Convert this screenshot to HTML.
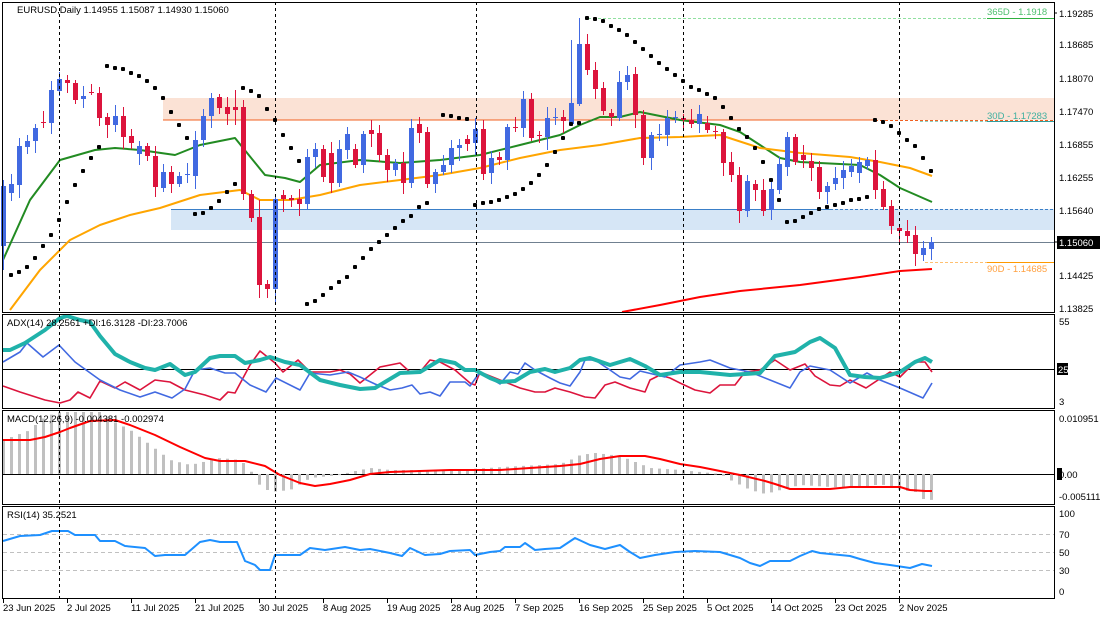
<!DOCTYPE html>
<html><head><meta charset="utf-8"><style>
html,body{margin:0;padding:0;background:#fff;width:1100px;height:619px;overflow:hidden}
svg{display:block;font-family:"Liberation Sans",sans-serif;font-size:9.5px}
</style></head><body>
<svg id="s" width="1100" height="619" xmlns="http://www.w3.org/2000/svg">
<rect width="1100" height="619" fill="#fff"/>
<rect x="163" y="98" width="891" height="22" fill="#fbe2d5"/>
<line x1="163" y1="120" x2="875" y2="120" stroke="#f06020" stroke-width="1"/>
<line x1="875" y1="120.5" x2="1054" y2="120.5" stroke="#f06020" stroke-dasharray="3,2"/>
<line x1="920" y1="121.5" x2="1054" y2="121.5" stroke="#8fd0c0" stroke-dasharray="3,2"/>
<rect x="171" y="209" width="883" height="21" fill="#d6e6f6"/>
<line x1="171" y1="209.5" x2="830" y2="209.5" stroke="#3a7fc8"/>
<line x1="830" y1="209.5" x2="1054" y2="209.5" stroke="#3a7fc8" stroke-dasharray="3,2"/>
<line x1="3" y1="242.5" x2="1054" y2="242.5" stroke="#708090"/>
<line x1="588" y1="18.5" x2="1054" y2="18.5" stroke="#90e0a0" stroke-dasharray="3,2"/>
<line x1="987" y1="18.5" x2="1054" y2="18.5" stroke="#30b040" stroke-width="1"/>
<line x1="925" y1="262.5" x2="1054" y2="262.5" stroke="#ffc070" stroke-dasharray="3,2"/>
<line x1="987" y1="262.5" x2="1054" y2="262.5" stroke="#ff9900"/>
<line x1="987" y1="121.5" x2="1054" y2="121.5" stroke="#30a0a0"/>
<g id="main"></g>
<line x1="3" y1="534.5" x2="1054" y2="534.5" stroke="#c0c0c0" stroke-dasharray="4,3"/>
<line x1="3" y1="552.5" x2="1054" y2="552.5" stroke="#c0c0c0" stroke-dasharray="4,3"/>
<line x1="3" y1="570.5" x2="1054" y2="570.5" stroke="#c0c0c0" stroke-dasharray="4,3"/>
<line x1="3" y1="369.5" x2="1054" y2="369.5" stroke="#000"/>
<line x1="3" y1="474.5" x2="1054" y2="474.5" stroke="#000"/>
<g id="ind"></g>
<g stroke="#000" stroke-dasharray="3,3">
<line x1="59.5" y1="2" x2="59.5" y2="598"/><line x1="275.5" y1="2" x2="275.5" y2="598"/>
<line x1="476.5" y1="2" x2="476.5" y2="598"/><line x1="683.5" y1="2" x2="683.5" y2="598"/>
<line x1="899.5" y1="2" x2="899.5" y2="598"/></g>
<g fill="none" stroke="#000">
<rect x="2.5" y="2.5" width="1052" height="310"/>
<rect x="2.5" y="314.5" width="1052" height="94"/>
<rect x="2.5" y="410.5" width="1052" height="94"/>
<rect x="2.5" y="506.5" width="1052" height="92"/>
</g>
<g fill="#000">
<text x="17" y="13">EURUSD,Daily  1.14955 1.15087 1.14930 1.15060</text>
<text x="7" y="326">ADX(14) 28.2561 +DI:16.3128 -DI:23.7006</text>
<text x="7" y="422">MACD(12,26,9) -0.004381 -0.002974</text>
<text x="7" y="518">RSI(14) 35.2521</text>
</g>
<text x="987" y="15" fill="#50c070">365D - 1.1918</text>
<text x="987" y="119" fill="#40b0a0">30D - 1.17283</text>
<text x="987" y="272" fill="#ffa040">90D - 1.14685</text>
<g fill="#000">
<text x="1059" y="17">1.19285</text><text x="1059" y="48">1.18685</text><text x="1059" y="82">1.18070</text>
<text x="1059" y="115">1.17470</text><text x="1059" y="148">1.16855</text><text x="1059" y="181">1.16255</text>
<text x="1059" y="214">1.15640</text><text x="1059" y="279">1.14425</text><text x="1059" y="312">1.13825</text>
<text x="1059" y="325">55</text><text x="1059" y="405">3</text>
<text x="1059" y="422">0.010951</text><text x="1059" y="500">-0.005111</text>
<text x="1059" y="517">100</text><text x="1059" y="538">70</text><text x="1059" y="556">50</text><text x="1059" y="574">30</text><text x="1059" y="595">0</text>
</g>
<rect x="1057" y="236" width="43" height="13" fill="#000"/><text x="1059" y="246" fill="#fff">1.15060</text>
<rect x="1057" y="363" width="11" height="12" fill="#000"/><text x="1058" y="373" fill="#fff">25</text>
<rect x="1057" y="468" width="5" height="12" fill="#000"/><text x="1059" y="478" fill="#000">0.00</text>
<g stroke="#000"><line x1="1054" y1="13" x2="1057" y2="13"/><line x1="1054" y1="242" x2="1057" y2="242"/></g>
<g id="dates" fill="#000"></g>
</svg>
<script>
var NS="http://www.w3.org/2000/svg";
function el(p,t,a){var e=document.createElementNS(NS,t);for(var k in a)e.setAttribute(k,a[k]);p.appendChild(e);return e;}
function pl(g,pts,c,w){el(g,"polyline",{points:pts.map(function(p){return p[0]+","+p[1]}).join(" "),fill:"none",stroke:c,"stroke-width":w,"stroke-linejoin":"round"});}
function interp(pts,x){for(var i=0;i<pts.length-1;i++){if(x<=pts[i+1][0]){var a=pts[i],b=pts[i+1];return a[1]+(b[1]-a[1])*(x-a[0])/(b[0]-a[0]);}}return pts[pts.length-1][1];}
var M=document.getElementById("main"),I=document.getElementById("ind");
pl(M,[[3,260],[30,200],[60,160],[95,150],[115,148],[140,150],[175,155],[200,145],[235,138],[265,175],[285,178],[300,182],[320,165],[360,160],[400,163],[440,160],[480,155],[520,145],[560,135],[580,125],[600,117],[620,117],[640,112],[660,116],[680,120],[720,125],[740,132],[760,145],[780,158],[800,162],[860,165],[880,175],[900,188],[932,202]],"#228b22",2);
pl(M,[[10,310],[40,270],[70,240],[100,225],[130,215],[160,208],[200,195],[240,190],[260,200],[290,200],[320,195],[360,185],[400,180],[440,175],[480,168],[520,158],[560,150],[600,145],[640,138],[680,137],[720,135],[760,148],[800,153],[850,157],[880,162],[910,168],[932,176]],"#ffa500",2);
pl(M,[[622,312],[660,305],[700,297],[740,291],[800,285],[860,277],[900,271],[932,269]],"#ff0000",2);
var C=[[246,186],[193,184],[185,146],[147,141],[141,128],[122,122],[123,90],[91,79],[80,83],[83,100],[99,96],[92,92],[93,118],[117,125],[125,116],[116,137],[136,143],[154,146],[146,156],[156,187],[188,172],[172,184],[184,176],[175,174],[176,140],[140,116],[116,98],[97,108],[107,114],[107,110],[107,194],[194,218],[217,285],[284,289],[289,199],[195,199],[198,200],[199,204],[204,157],[157,149],[149,177],[153,183],[183,149],[150,134],[149,165],[165,134],[130,134],[133,155],[155,170],[170,163],
[163,183],[183,128],[124,133],[132,184],[184,172],[172,165],[165,148],[148,145],[139,144],[143,129],[129,174],[173,158],[157,160],[160,127],[127,128],[128,99],[99,138],[135,135],[137,118],[118,117],[117,121],[124,103],[104,44],[44,70],[70,89],[88,111],[113,117],[118,82],[82,75],[74,115],[115,158],[158,135],[135,134],[135,118],[118,117],[118,120],[120,124],[124,114],[123,130],[131,131],[132,163],[162,175],[175,211],[211,181],[184,190],[190,211],[210,189],[190,164],[167,137],[137,162],[155,160],[161,168],[167,192],[192,186],[184,178],[178,170],[172,166],[173,162],[166,160],[160,190],[189,207],[206,226],[228,231],[231,236],[235,254],[255,248],[249,242]];
var sp={0:[180,270],32:[200,298],34:[195,305],33:[280,298],72:[18,106],71:[40,108],29:[90,125],30:[100,200]};
for(var i=0;i<C.length;i++){var x=3+8*i,o=C[i][0],c=C[i][1],up=c<o,col=up?"#4169e1":"#dc143c";
var t=Math.min(o,c),b=Math.max(o,c),h=t-3-((i*7)%9),l=b+3+((i*5)%11);if(sp[i]){h=sp[i][0];l=sp[i][1];}
el(M,"line",{x1:x+0.5,y1:h,x2:x+0.5,y2:l,stroke:col,"stroke-width":1});
el(M,"rect",{x:x-2,y:t,width:5,height:Math.max(1,b-t),fill:col});}
var S1=[[11,275],[19,272],[27,267],[35,258],[43,246],[51,235],[59,220],[67,202],[75,185],[83,171],[91,158],[99,147],[107,66],[115,68],[123,69],[131,73],[139,76],[147,81],[155,88],[163,98],[171,112],[179,125],[187,138],[195,214],[203,213],[211,208],[219,201],[227,192],[235,184],[243,88],[251,91],[259,96],[267,109],[275,120],[283,135],[291,148],[299,161],[307,304],[315,301],[323,295],[331,288],[339,282],[347,277],[355,267],[363,258],[371,249],[379,242],[387,235],[395,228],[403,221],[411,216],[419,207],[427,203],[443,115],[451,116],[459,118],[467,119],[475,205],[483,203],[491,202],[499,200],[507,197],[515,194],[523,189],[531,183],[539,175],[547,165],[555,152],[563,138],[571,124],[579,123],[587,18],[595,19],[603,21],[611,26],[619,30],[627,35],[635,42],[643,49],[651,56],[659,63],[667,69],[675,75],[683,81],[691,87],[699,90],[707,94],[715,98],[723,107],[731,118],[739,129],[747,137],[755,148],[763,162],[771,180],[779,200],[787,222],[795,221],[803,217],[811,213],[819,209],[827,207],[835,205],[843,203],[851,200],[859,199],[867,197],[875,120],[883,122],[891,126],[899,133],[907,140],[915,146],[923,158],[931,171]];
S1.forEach(function(p){el(M,"rect",{x:p[0]-2,y:p[1]-2,width:4,height:4,rx:1,fill:"#000"});});
pl(I,[[3,386],[20,392],[45,400],[60,403],[70,400],[78,392],[90,398],[100,381],[115,388],[125,382],[140,390],[155,380],[170,382],[185,390],[205,395],[220,400],[228,392],[235,393],[250,365],[260,351],[275,363],[283,372],[298,360],[310,372],[330,372],[340,370],[350,374],[360,383],[380,367],[400,363],[410,372],[420,372],[430,360],[440,362],[455,370],[470,383],[475,385],[480,372],[500,380],[520,388],[535,392],[545,392],[555,388],[570,392],[585,397],[595,398],[605,385],[615,382],[630,388],[645,392],[650,380],[660,375],[670,378],[680,383],[695,390],[710,393],[720,385],[735,385],[745,372],[760,370],[775,360],[790,370],[805,364],[815,376],[830,385],[840,386],[850,380],[866,388],[890,372],[900,377],[915,362],[925,362],[932,372]],"#dc143c",1.6);
pl(I,[[3,362],[20,352],[27,343],[43,357],[59,345],[75,362],[100,380],[120,390],[140,397],[155,392],[172,398],[185,389],[195,370],[210,368],[225,373],[235,373],[250,385],[266,392],[276,378],[300,390],[310,373],[330,375],[348,372],[360,377],[375,384],[390,390],[402,388],[412,385],[420,394],[430,392],[440,396],[450,382],[465,382],[470,386],[480,372],[500,384],[510,372],[518,374],[525,363],[535,370],[550,378],[560,383],[570,386],[580,372],[585,360],[595,360],[610,370],[620,377],[630,379],[640,371],[665,377],[680,365],[700,362],[710,360],[730,368],[750,372],[770,380],[790,388],[800,372],[810,366],[830,370],[850,383],[867,373],[880,380],[900,388],[923,398],[932,383]],"#4169e1",1.6);
pl(I,[[3,350],[10,350],[25,343],[45,330],[60,318],[67,316],[80,320],[90,322],[100,336],[115,354],[130,362],[145,368],[155,370],[170,364],[185,375],[195,372],[210,358],[220,356],[235,356],[245,363],[260,360],[270,357],[285,362],[300,365],[320,380],[340,385],[360,389],[375,388],[400,373],[420,372],[440,360],[455,363],[465,370],[475,370],[490,378],[500,382],[515,381],[530,372],[545,369],[555,372],[570,368],[580,360],[590,358],[610,365],[620,362],[630,359],[645,366],[660,375],[680,372],[700,372],[730,375],[760,373],[775,356],[795,352],[810,342],[820,338],[835,348],[850,375],[865,377],[880,378],[900,372],[915,362],[925,358],[932,362]],"#20b2aa",4);
var H=[[3,440],[30,430],[40,420],[50,415],[60,412],[100,412],[110,420],[130,430],[150,445],[170,460],[190,465],[220,458],[240,460],[250,470],[258,484],[270,492],[290,490],[300,484],[310,478],[320,477],[340,475],[350,472],[370,468],[390,470],[420,470],[450,471],[470,469],[520,466],[560,464],[570,460],[580,455],[595,453],[620,456],[640,464],[650,468],[680,470],[700,472],[720,474],[730,480],[750,490],[765,494],[780,490],[800,485],[830,487],[860,488],[880,484],[900,490],[915,492],[923,499],[932,500]];
for(var i=0;i<117;i++){var x=3+8*i,v=interp(H,x);el(I,"rect",{x:x-1,y:Math.min(v,474),width:3,height:Math.max(1,Math.abs(v-474)),fill:"#c0c0c0"});}
pl(I,[[3,440],[30,440],[45,437],[60,432],[70,428],[90,421],[115,420],[130,425],[155,435],[180,447],[205,458],[220,461],[245,461],[265,466],[280,475],[300,483],[315,486],[330,484],[350,480],[370,474],[390,472],[450,470],[500,470],[530,468],[560,466],[580,464],[600,459],[620,456],[645,456],[660,459],[680,464],[700,467],[720,471],[740,475],[765,481],[775,484],[790,489],[830,489],[850,487],[900,487],[910,490],[925,491],[932,491]],"#ff0000",2);
pl(I,[[3,541],[20,536],[40,535],[52,531],[68,531],[75,535],[95,535],[100,541],[115,541],[125,546],[145,548],[155,556],[165,555],[185,555],[200,542],[210,540],[220,542],[237,542],[245,561],[255,565],[260,570],[270,570],[275,555],[300,555],[310,548],[325,550],[345,547],[360,550],[370,549],[390,553],[402,556],[410,548],[425,555],[440,554],[450,551],[470,550],[475,555],[490,552],[500,551],[505,547],[520,547],[525,543],[535,550],[545,549],[560,548],[575,538],[590,545],[605,549],[620,545],[630,552],[640,558],[655,555],[675,552],[695,551],[720,552],[740,558],[750,563],[760,566],[770,561],[790,561],[800,556],[812,551],[820,553],[850,556],[860,559],[875,563],[890,565],[910,568],[922,564],[932,566]],"#1e90ff",2);
var D=document.getElementById("dates"),L=["23 Jun 2025","2 Jul 2025","11 Jul 2025","21 Jul 2025","30 Jul 2025","8 Aug 2025","19 Aug 2025","28 Aug 2025","7 Sep 2025","16 Sep 2025","25 Sep 2025","5 Oct 2025","14 Oct 2025","23 Oct 2025","2 Nov 2025"];
L.forEach(function(t,k){var x=3+64*k;el(D,"line",{x1:x+0.5,y1:599,x2:x+0.5,y2:603,stroke:"#000"});var e=el(D,"text",{x:x,y:611});e.textContent=t;});
</script>
</body></html>
